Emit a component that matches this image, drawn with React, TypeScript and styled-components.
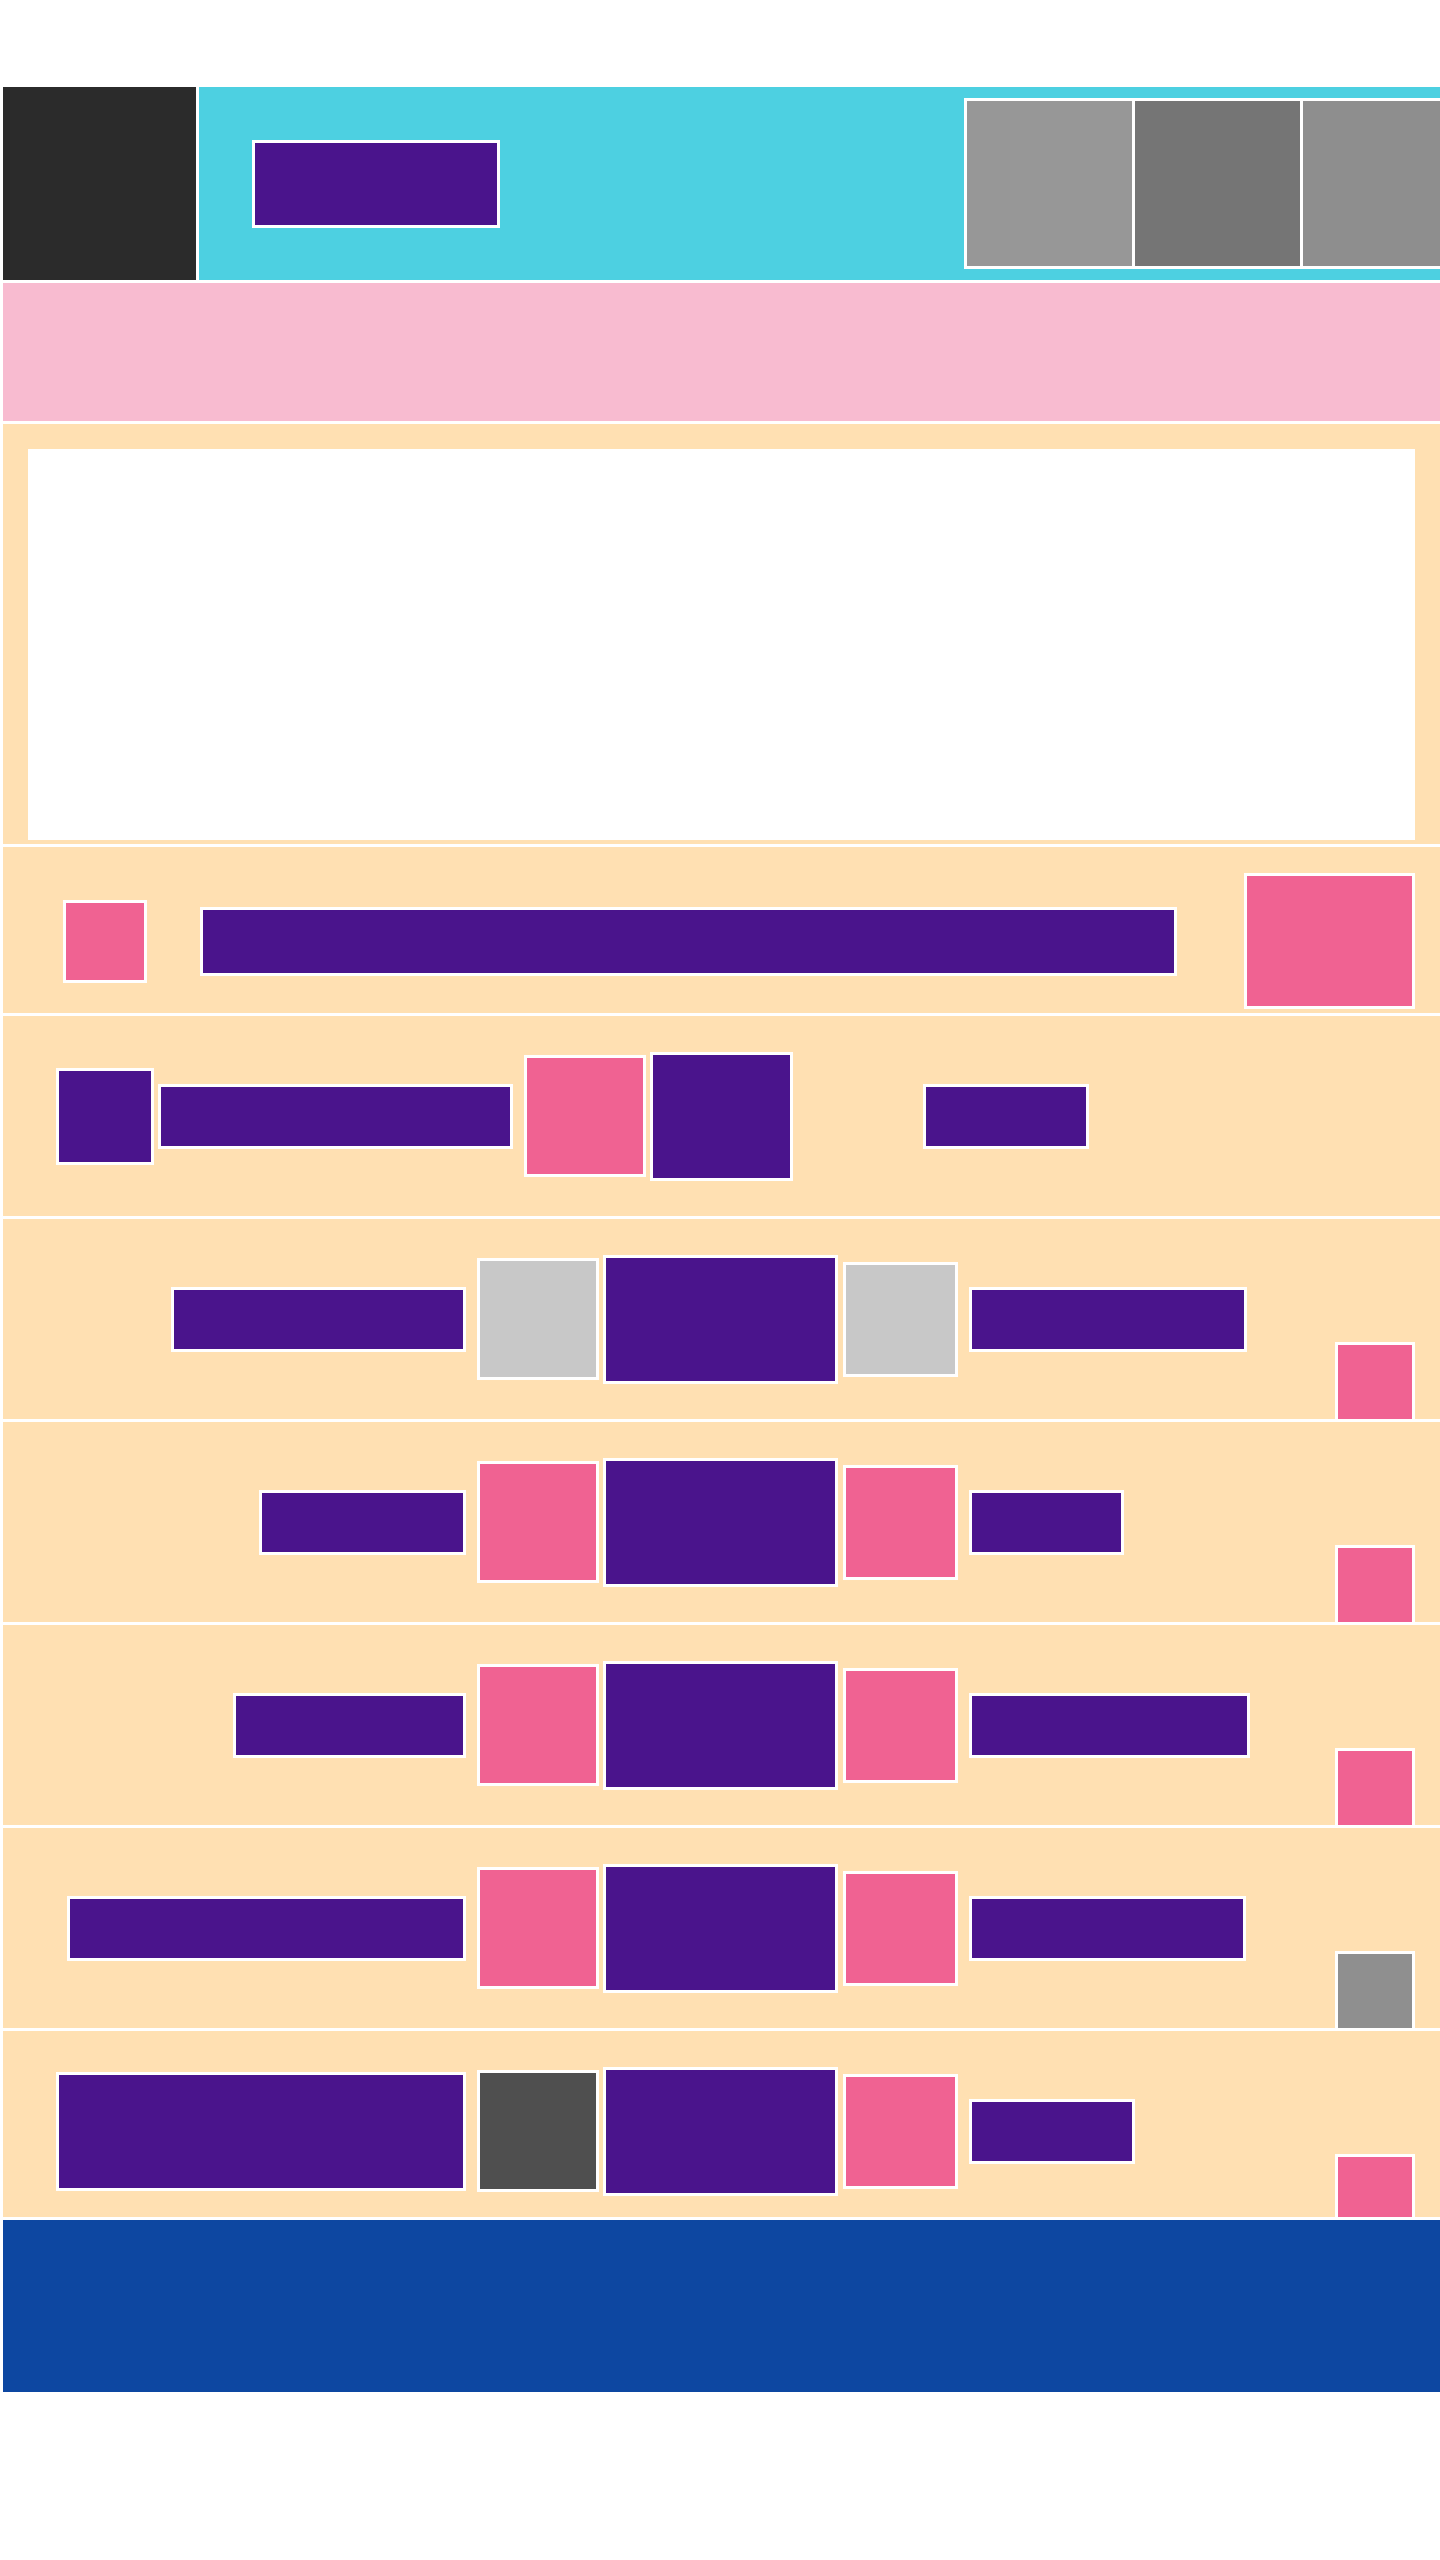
import React from 'react';
import styled, { createGlobalStyle } from 'styled-components';

const PURPLE = '#4a148c';
const PINK = '#f06292';
const SAND = '#ffe0b2';
const LIGHT = '#c8c8c8';

const GlobalStyle = createGlobalStyle`
	html, body {
		margin: 0;
		padding: 0;
		background: #fff;
		overflow-x: hidden;
		font-family: "Liberation Sans", Arial, sans-serif;
	}
	* {
		box-sizing: border-box;
	}
`;

type Stage = {
	left: number;
	leftH?: number;
	first: string;
	second: string;
	right: number;
	corner: string;
};

// rows that share the five-column layout
const STAGES: Stage[] = [
	{ left: 295, first: LIGHT, second: LIGHT, right: 278, corner: PINK },
	{ left: 207, first: PINK, second: PINK, right: 155, corner: PINK },
	{ left: 233, first: PINK, second: PINK, right: 281, corner: PINK },
	{ left: 399, first: PINK, second: PINK, right: 277, corner: '#8f8f8f' },
	{ left: 410, leftH: 119, first: '#4f4f4f', second: PINK, right: 166, corner: PINK },
];

const THUMBS = ['#979797', '#757575', '#8e8e8e'];

const StageRow = ({ stage }: { stage: Stage }) => (
	<Row>
		<LeftCell>
			<Tile $w={stage.left} $h={stage.leftH || 65} $bg={PURPLE} />
		</LeftCell>
		<Tile $w={122} $h={122} $bg={stage.first} $ml={11} />
		<Tile $w={235} $h={129} $bg={PURPLE} $ml={4} />
		<Tile $w={115} $h={115} $bg={stage.second} $ml={5} />
		<Tile $w={stage.right} $h={65} $bg={PURPLE} $ml={11} />
		<Corner $bg={stage.corner} />
	</Row>
);

const App = () => {
	const last = STAGES[STAGES.length - 1];
	return (
		<>
			<GlobalStyle />
			<Page>
				<Header>
					<Logo />
					<TopBar>
						<Tile $w={248} $h={88} $bg={PURPLE} />
						<Thumbs>
							{THUMBS.map((c, i) => (
								<Thumb key={i} $bg={c} />
							))}
						</Thumbs>
					</TopBar>
				</Header>
				<Banner />
				<Hero>
					<Canvas />
				</Hero>
				<Row $h={166} $pt={22}>
					<Tile $w={84} $h={83} $bg={PINK} $ml={60} />
					<Tile $w={977} $h={69} $bg={PURPLE} $ml={53} />
					<Tile $w={171} $h={136} $bg={PINK} $ml={67} />
				</Row>
				<Row>
					<Tile $w={98} $h={97} $bg={PURPLE} $ml={53} />
					<Tile $w={355} $h={65} $bg={PURPLE} $ml={4} />
					<Tile $w={122} $h={122} $bg={PINK} $ml={11} />
					<Tile $w={143} $h={129} $bg={PURPLE} $ml={4} />
					<Tile $w={166} $h={65} $bg={PURPLE} $ml={130} />
				</Row>
				{STAGES.slice(0, -1).map((s, i) => (
					<StageRow key={i} stage={s} />
				))}
				<Clip>
					<StageRow stage={last} />
				</Clip>
				<Footer />
			</Page>
		</>
	);
};

const Page = styled.div`
	width: 1440px;
	padding: 87px 0 0 3px;
	display: flex;
	flex-direction: column;
	gap: 3px;
	overflow: hidden;
`;

const Header = styled.header`
	height: 193px;
	display: flex;
	gap: 3px;
`;

const Logo = styled.div`
	width: 193px;
	height: 193px;
	flex-shrink: 0;
	background: #2b2b2b;
`;

const TopBar = styled.div`
	flex: 1;
	min-width: 0;
	background: #4dd0e1;
	display: flex;
	align-items: center;
	padding-left: 53px;
	overflow: hidden;
`;

const Thumbs = styled.div`
	flex-shrink: 0;
	margin-left: 464px;
	display: flex;
	gap: 3px;
	border: 3px solid #fff;
	background: #fff;
`;

const Thumb = styled.div<{ $bg: string }>`
	width: 165px;
	height: 165px;
	background: ${(p) => p.$bg};
`;

const Tile = styled.div<{ $w: number; $h: number; $bg: string; $ml?: number }>`
	flex-shrink: 0;
	width: ${(p) => p.$w}px;
	height: ${(p) => p.$h}px;
	margin-left: ${(p) => p.$ml || 0}px;
	background: ${(p) => p.$bg};
	border: 3px solid #fff;
`;

const Banner = styled.section`
	height: 138px;
	background: #f8bbd0;
`;

const Hero = styled.section`
	background: ${SAND};
	padding: 25px 25px 4px 25px;
`;

const Canvas = styled.div`
	height: 391px;
	background: #fff;
`;

const Row = styled.section<{ $h?: number; $pt?: number }>`
	height: ${(p) => p.$h || 200}px;
	padding-top: ${(p) => p.$pt || 0}px;
	background: ${SAND};
	display: flex;
	align-items: center;
	flex-shrink: 0;
`;

const LeftCell = styled.div`
	width: 463px;
	flex-shrink: 0;
	display: flex;
	justify-content: flex-end;
`;

const Corner = styled.div<{ $bg: string }>`
	align-self: flex-end;
	flex-shrink: 0;
	width: 80px;
	height: 77px;
	margin-left: auto;
	margin-right: 25px;
	background: ${(p) => p.$bg};
	border: 3px solid #fff;
	border-bottom: none;
`;

const Clip = styled.div`
	height: 186px;
	overflow: hidden;
	flex-shrink: 0;
`;

const Footer = styled.footer`
	height: 172px;
	background: #0d47a1;
`;

export default App;
